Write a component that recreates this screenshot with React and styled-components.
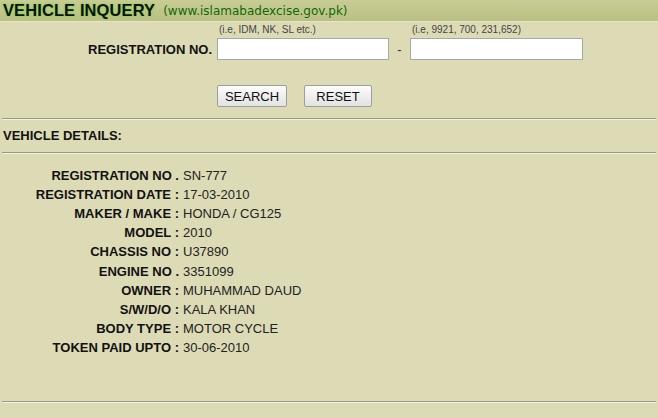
import React from 'react';
import styled, { createGlobalStyle } from 'styled-components';

const GlobalStyle = createGlobalStyle`
  html, body {
    margin: 0;
    padding: 0;
    background: #dddbb6;
    font-family: "Liberation Sans", Arial, sans-serif;
    color: #111;
  }
`;

const Page = styled.div`
  width: 658px;
  height: 418px;
  background: #dddbb6;
  overflow: hidden;
`;

const TitleBar = styled.div`
  height: 21px;
  display: flex;
  align-items: center;
  gap: 8px;
  padding-left: 3px;
  background: linear-gradient(#c8cc95, #bac083);
  border-bottom: 1px solid #e6e6c6;
`;

const Title = styled.h1`
  margin: 0;
  font-size: 16.5px;
  font-weight: bold;
  letter-spacing: 0.1px;
  color: #111;
  text-shadow: 0 0 2px #7cd14a, 0 0 3px #8fdc5a;
`;

const Site = styled.span`
  font-family: "DejaVu Sans", Verdana, sans-serif;
  font-size: 12px;
  color: #1f5c12;
  text-shadow: 0 0 2px #a6e07a;
`;

const Form = styled.div`
  padding-top: 0;
`;

const HintRow = styled.div`
  display: flex;
  padding-left: 219px;
  height: 15px;
  align-items: center;
`;

const Hint = styled.span`
  width: ${(p) => p.$w}px;
  font-size: 10px;
  color: #444;
`;

const FieldRow = styled.div`
  display: flex;
  align-items: center;
  height: 24px;
`;

const FieldLabel = styled.label`
  width: 217px;
  text-align: right;
  font-size: 13px;
  font-weight: bold;
  padding-right: 5px;
  box-sizing: border-box;
`;

const TextBox = styled.input`
  width: ${(p) => p.$w}px;
  height: 22px;
  box-sizing: border-box;
  border: 1px solid #a8a8a8;
  background: #fff;
  margin: 0;
  padding: 2px 4px;
`;

const Dash = styled.span`
  width: 21px;
  text-align: center;
  font-size: 13px;
  color: #333;
`;

const ButtonRow = styled.div`
  display: flex;
  gap: 17px;
  padding-left: 217px;
  margin-top: 24px;
`;

const Button = styled.button`
  width: ${(p) => p.$w}px;
  height: 22px;
  padding: 0;
  font-family: "Liberation Sans", Arial, sans-serif;
  font-size: 13px;
  color: #111;
  background: linear-gradient(#fcfcfc, #e2e2e2);
  border: 1px solid #9d9d9d;
  border-radius: 2px;
`;

const Rule = styled.hr`
  margin: ${(p) => p.$top}px 2px 0 2px;
  border: 0;
  border-top: 1px solid #999988;
  border-bottom: 1px solid #f2f1dc;
  height: 0;
`;

const SectionTitle = styled.div`
  padding-left: 3px;
  height: 32px;
  line-height: 32px;
  font-size: 13px;
  font-weight: bold;
`;

const Details = styled.div`
  margin-top: 12px;
  display: grid;
  grid-template-columns: 179px auto;
  grid-auto-rows: 19.1px;
  column-gap: 4px;
  align-items: center;
  font-size: 13px;
`;

const Key = styled.div`
  text-align: right;
  font-weight: bold;
  white-space: nowrap;
`;

const Value = styled.div`
  color: #222;
  white-space: nowrap;
`;

const rows = [
  ['REGISTRATION NO .', 'SN-777'],
  ['REGISTRATION DATE :', '17-03-2010'],
  ['MAKER / MAKE :', 'HONDA / CG125'],
  ['MODEL :', '2010'],
  ['CHASSIS NO :', 'U37890'],
  ['ENGINE NO .', '3351099'],
  ['OWNER :', 'MUHAMMAD DAUD'],
  ['S/W/D/O :', 'KALA KHAN'],
  ['BODY TYPE :', 'MOTOR CYCLE'],
  ['TOKEN PAID UPTO :', '30-06-2010'],
];

export default function App() {
  return (
    <>
      <GlobalStyle />
      <Page>
        <TitleBar>
          <Title>VEHICLE INQUERY</Title>
          <Site>(www.islamabadexcise.gov.pk)</Site>
        </TitleBar>
        <Form>
          <HintRow>
            <Hint $w={193}>(i.e, IDM, NK, SL etc.)</Hint>
            <Hint>(i.e, 9921, 700, 231,652)</Hint>
          </HintRow>
          <FieldRow>
            <FieldLabel>REGISTRATION NO.</FieldLabel>
            <TextBox $w={172} />
            <Dash>-</Dash>
            <TextBox $w={173} />
          </FieldRow>
          <ButtonRow>
            <Button $w={70}>SEARCH</Button>
            <Button $w={68}>RESET</Button>
          </ButtonRow>
        </Form>
        <Rule $top={11} />
        <SectionTitle>VEHICLE DETAILS:</SectionTitle>
        <Rule $top={0} />
        <Details>
          {rows.map(([k, v]) => (
            <React.Fragment key={k}>
              <Key>{k}</Key>
              <Value>{v}</Value>
            </React.Fragment>
          ))}
        </Details>
        <Rule $top={44} />
      </Page>
    </>
  );
}
